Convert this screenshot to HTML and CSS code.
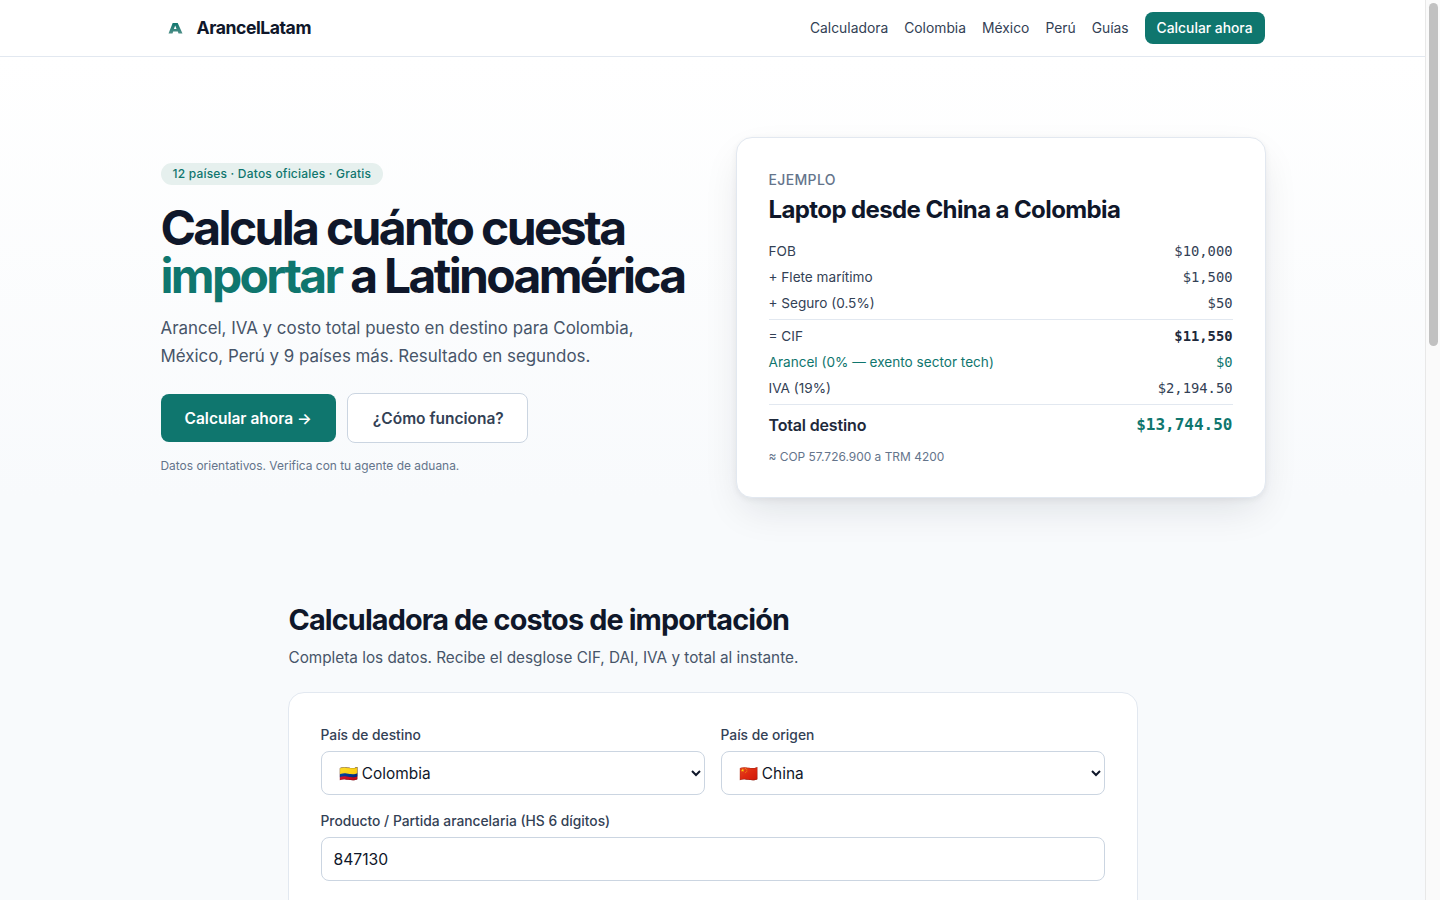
FILE: index.html
```html
<!DOCTYPE html>
<html lang="es">
<head>
<meta charset="utf-8">
<title>ArancelLatam</title>
<link rel="stylesheet" href="styles.css">
</head>
<body>
<div class="page">
<header class="nav">
  <div class="nav-inner">
    <a class="brand" href="#">
      <svg class="logo" width="28" height="28" viewBox="0 0 28 28" aria-hidden="true"><defs><linearGradient id="lg" x1="0" y1="0" x2="0" y2="1"><stop offset="0" stop-color="#0f766e"/><stop offset="1" stop-color="#4f8f88"/></linearGradient></defs><path d="M11.700 9h5l4.800 10.500h-4l-.7-2h-4.600l-.7 2h-4zM12.900 14.900h2.600l-1.300-3.400z" fill="url(#lg)" fill-rule="evenodd"/></svg>
      <span>ArancelLatam</span>
    </a>
    <nav class="links">
      <a href="#">Calculadora</a><a href="#">Colombia</a><a href="#">México</a><a href="#">Perú</a><a href="#">Guías</a>
      <a class="nav-cta" href="#">Calcular ahora</a>
    </nav>
  </div>
</header>
<main>
  <section class="hero">
    <div class="hero-copy">
      <span class="badge">12 países · Datos oficiales · Gratis</span>
      <h1>Calcula cuánto cuesta <em>importar</em> a Latinoamérica</h1>
      <p class="lead">Arancel, IVA y costo total puesto en destino para Colombia, México, Perú y 9 países más. Resultado en segundos.</p>
      <div class="actions">
        <a class="btn primary" href="#">Calcular ahora →</a>
        <a class="btn ghost" href="#">¿Cómo funciona?</a>
      </div>
      <p class="note">Datos orientativos. Verifica con tu agente de aduana.</p>
    </div>
    <aside class="example">
      <div class="eyebrow">EJEMPLO</div>
      <h2>Laptop desde China a Colombia</h2>
      <div class="rows">
        <div class="row"><span>FOB</span><b>$10,000</b></div>
        <div class="row"><span>+ Flete marítimo</span><b>$1,500</b></div>
        <div class="row"><span>+ Seguro (0.5%)</span><b>$50</b></div>
      </div>
      <div class="rows ruled">
        <div class="row"><span>= CIF</span><b class="strong">$11,550</b></div>
        <div class="row green"><span>Arancel (0% — exento sector tech)</span><b>$0</b></div>
        <div class="row"><span>IVA (19%)</span><b>$2,194.50</b></div>
      </div>
      <div class="total"><span>Total destino</span><b>$13,744.50</b></div>
      <div class="fx">≈ COP 57.726.900 a TRM 4200</div>
    </aside>
  </section>
  <section class="calc">
    <h2 class="calc-title">Calculadora de costos de importación</h2>
    <p class="calc-sub">Completa los datos. Recibe el desglose CIF, DAI, IVA y total al instante.</p>
    <form class="card">
      <div class="two">
        <label class="field"><span>País de destino</span>
          <select><option>🇨🇴 Colombia</option></select></label>
        <label class="field"><span>País de origen</span>
          <select><option>🇨🇳 China</option></select></label>
      </div>
      <label class="field"><span>Producto / Partida arancelaria (HS 6 dígitos)</span>
        <input type="text" value="847130"></label>
    </form>
  </section>
</main>
</div>
<div class="scrollbar"><div class="thumb"></div></div>
</body>
</html>
```
FILE: styles.css
```css
* { box-sizing: border-box; }
html, body { height: 100%; overflow: hidden; }
body {
  margin: 0;
  display: flex;
  font-family: Inter, "Noto Sans", sans-serif;
  color: #0f172a;
  background: #f8fafc;
}
a { text-decoration: none; color: inherit; }
.page { flex: 1; min-width: 0; height: 100%; overflow: hidden; }
.scrollbar { flex: 0 0 15px; background: #fafafa; border-left: 1px solid #e8e8e8; padding: 3px 2px 0 3px; }
.thumb { height: 343px; background: #c1c1c1; border-radius: 5px; }
.nav { background: #fff; border-bottom: 1px solid #e2e8f0; }
.nav-inner {
  max-width: 1152px; margin: 0 auto; padding: 0 24px; height: 56px;
  display: flex; align-items: center; justify-content: space-between;
}
.brand { display: flex; align-items: center; gap: 8px; font-size: 17.6px; font-weight: 700; letter-spacing: -0.025em; color: #0f172a; }
.brand span { margin-bottom: 2px; }
.logo { display: block; }
.links { display: flex; align-items: center; gap: 16px; font-size: 13.85px; color: #334155; }
.nav-cta { background: #0f766e; color: #fff; font-weight: 500; padding: 0 12px; height: 32px; line-height: 32px; border-radius: 8px; }
main { background: linear-gradient(180deg, #ffffff 0, #f8fafc 440px); }
.hero {
  max-width: 1152px; margin: 0 auto; padding: 80px 24px 0;
  display: grid; grid-template-columns: 1fr 1fr; gap: 48px; align-items: center;
}
.badge {
  display: inline-block; background: #e6f0ee; color: #0f766e;
  font-size: 12px; font-weight: 500; letter-spacing: .2px; line-height: 14px; padding: 4px 12px; border-radius: 999px;
}
h1 { margin: 19px 0 0; font-size: 48px; line-height: 48px; font-weight: 700; letter-spacing: -0.0555em; color: #0f172a; }
h1 em { font-style: normal; color: #0f766e; }
.lead { margin: 14px 0 0; font-size: 16.9px; line-height: 28px; color: #475569; }
.actions { margin-top: 23px; display: flex; align-items: center; gap: 11px; }
.btn { display: block; font-size: 15.5px; font-weight: 600; border-radius: 8px; line-height: 24px; }
.btn.primary { background: #0f766e; color: #fff; padding: 13px 24px 11px; }
.btn.ghost { background: #fff; color: #334155; border: 1px solid #cbd5e1; padding: 13px 23px 11px 25px; }
.note { margin: 16px 0 0; font-size: 11.95px; line-height: 14px; color: #64748b; }
.example {
  margin: 0 -1px;
  background: #fff; border: 1px solid #e2e8f0; border-radius: 16px; padding: 32px;
  box-shadow: 0 16px 40px -8px rgba(15,23,42,.12), 0 2px 6px rgba(15,23,42,.06);
}
.eyebrow { font-size: 14px; line-height: 20px; font-weight: 500; letter-spacing: .025em; color: #64748b; }
.example h2 { margin: 4px 0 0; font-size: 24px; line-height: 32px; font-weight: 700; letter-spacing: -0.025em; color: #0f172a; }
.rows { margin-top: 12px; }
.rows.ruled { margin-top: 3px; padding-top: 3px; border-top: 1px solid #e2e8f0; }
.row { display: flex; justify-content: space-between; font-size: 13.6px; line-height: 20px; padding: 3px 0; color: #334155; }
.row b, .total b { font-family: "DejaVu Sans Mono", monospace; font-weight: 400; font-size: 13.8px; }
.row b.strong { font-weight: 700; color: #1e293b; }
.row.green, .row.green b { color: #0f766e; }
.total { margin-top: 3px; padding-top: 8px; border-top: 1px solid #e2e8f0; display: flex; justify-content: space-between; align-items: center; font-size: 16px; line-height: 24px; font-weight: 600; letter-spacing: -0.01em; color: #1e293b; }
.total b { font-size: 16px; font-weight: 700; letter-spacing: 0; color: #0f766e; }
.fx { margin-top: 12px; font-size: 11.95px; line-height: 16px; color: #64748b; }
.calc { max-width: 896px; margin: 0 auto; padding: 104px 24px 0; }
.calc-title { margin: 0; font-size: 28.8px; line-height: 36px; font-weight: 700; letter-spacing: -0.03em; color: #0f172a; }
.calc-sub { margin: 8px 0 0; font-size: 15.3px; line-height: 24px; color: #475569; }
.card { margin: 22px -1px 0; background: #fff; border: 1px solid #e2e8f0; border-radius: 16px; padding: 32px 32px 200px; display: flex; flex-direction: column; gap: 16px; }
.two { display: grid; grid-template-columns: 1fr 1fr; gap: 16px; }
.field { display: block; }
.field > span { display: block; font-size: 13.8px; line-height: 20px; font-weight: 500; color: #334155; margin-bottom: 6px; }
select, input { display: block; width: 100%; height: 44px; background: #fff; border: 1px solid #cbd5e1; border-radius: 8px; font-family: inherit; color: #0f172a; }
select { padding: 0 12px 0 13px; font-size: 15.4px; }
input { padding: 0 12px; font-size: 15.7px; }
```
